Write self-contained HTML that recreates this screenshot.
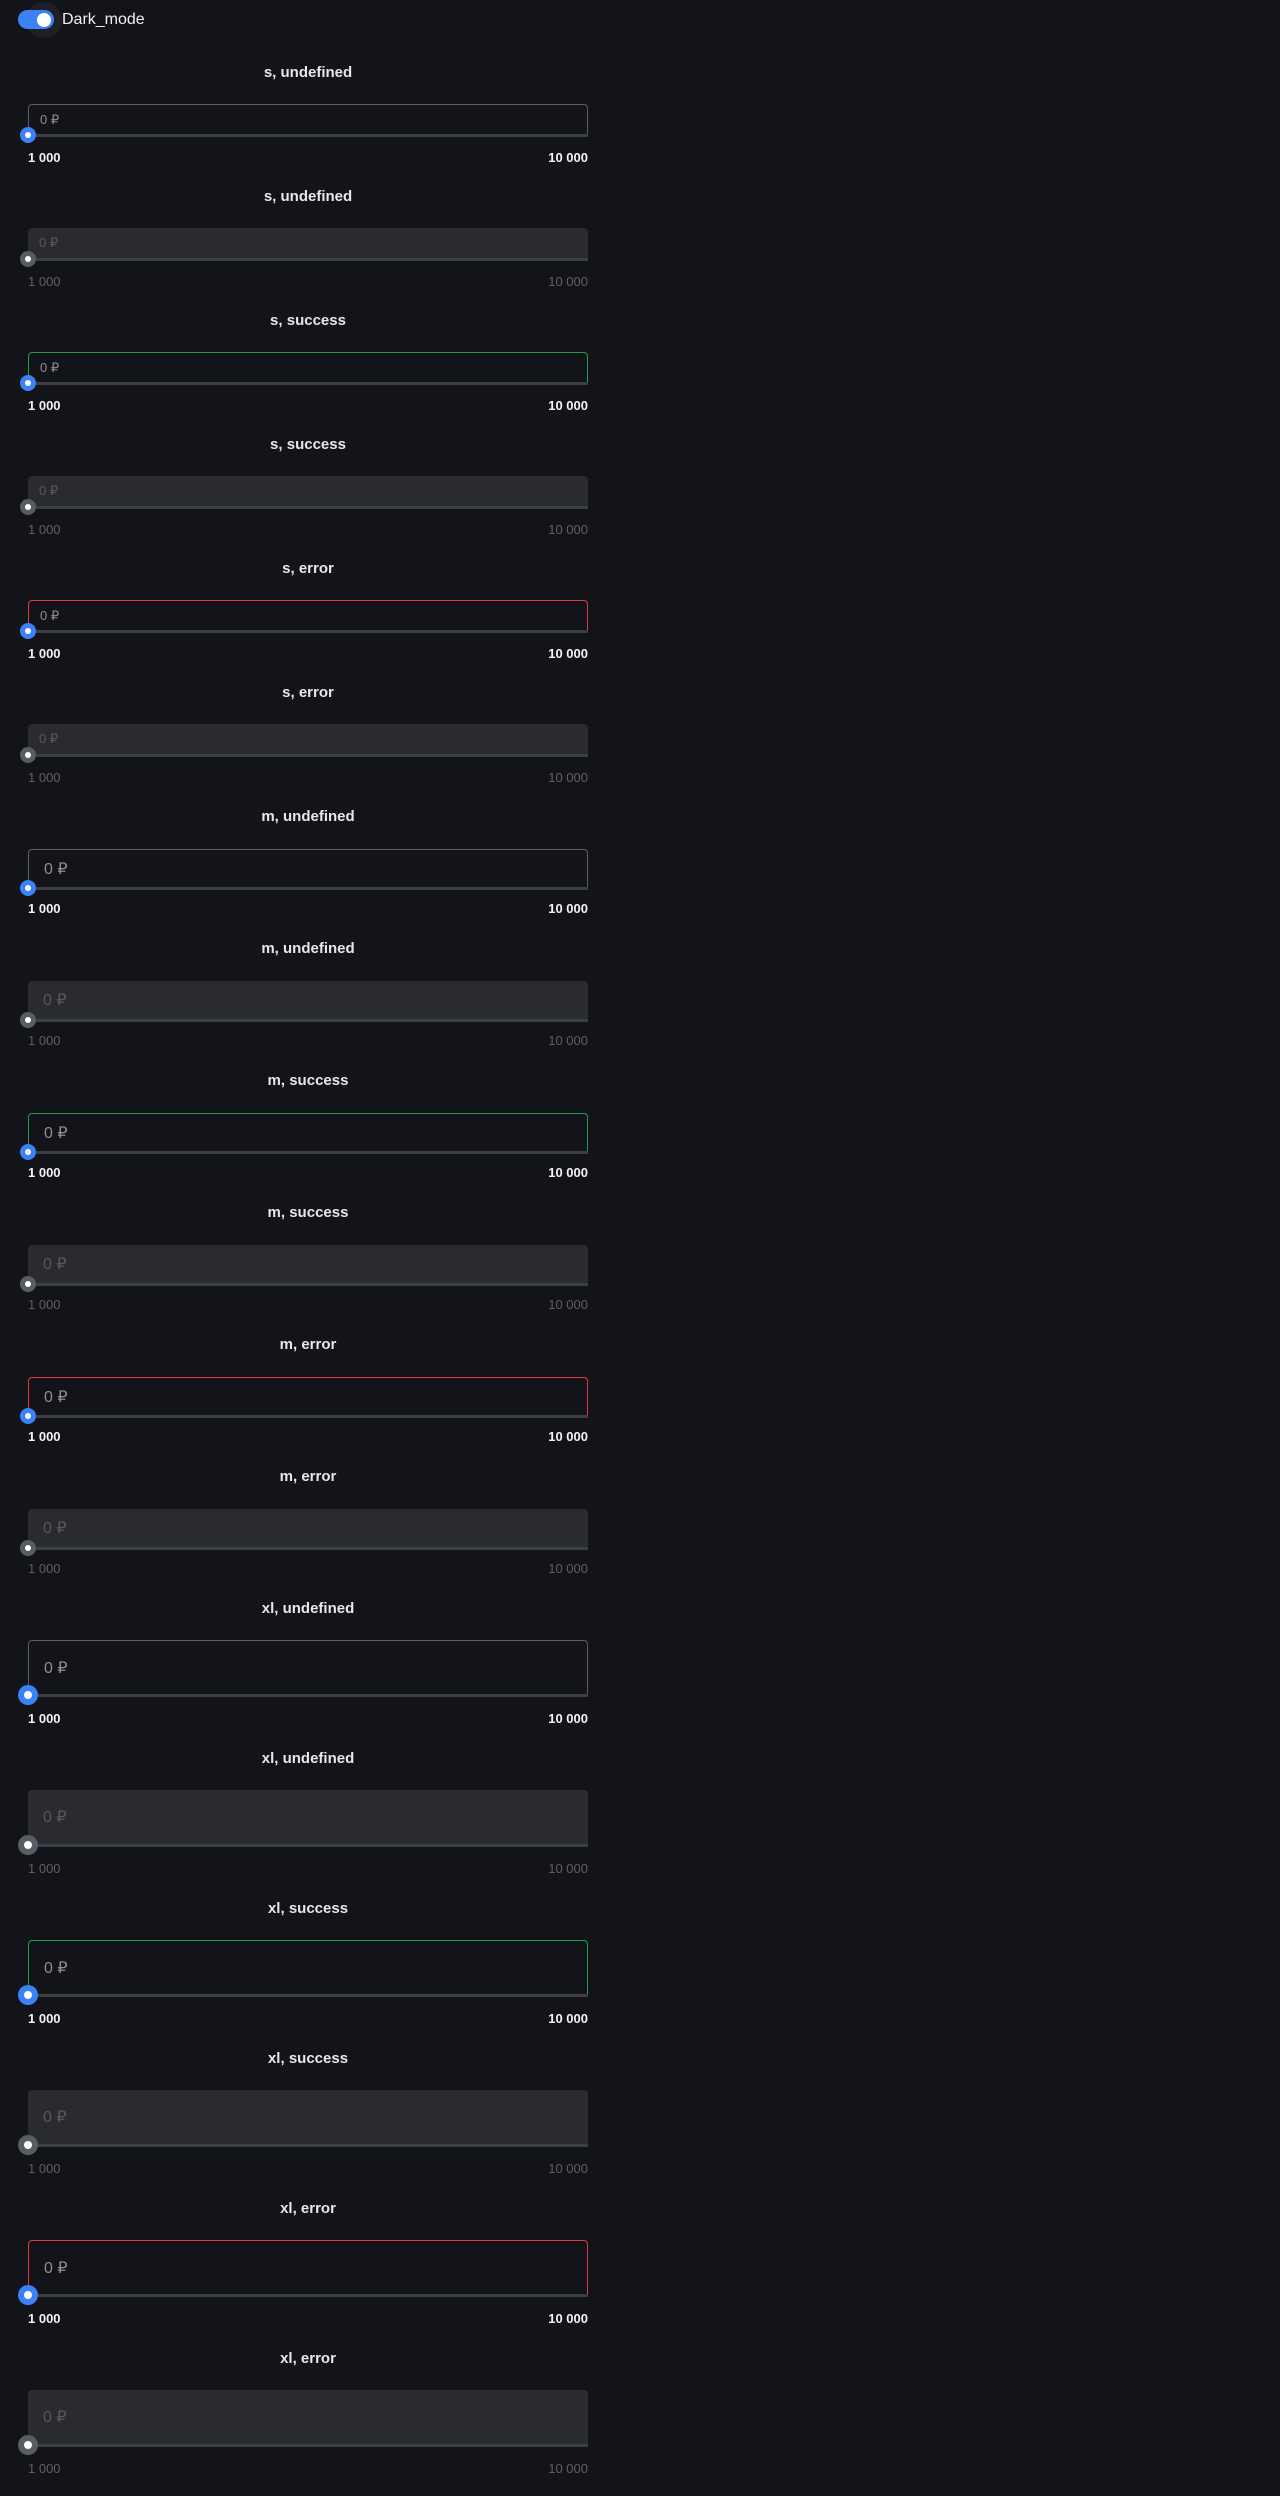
<!DOCTYPE html>
<html><head><meta charset="utf-8">
<style>
html,body{margin:0;padding:0;background:#131419;width:1280px;height:2496px;overflow:hidden;font-family:"Liberation Sans",sans-serif;}
.a{position:absolute;}
.t{position:absolute;left:28px;width:560px;text-align:center;color:#e6e7ea;font-size:15px;font-weight:bold;line-height:18px;}
.box{position:absolute;left:28px;width:558px;border:1px solid #5b5e65;border-bottom:none;border-radius:4px 4px 0 0;box-sizing:content-box;}
.box.dis{border:none;background:#2a2b30;width:560px;}
.box.success{border-color:#1f9d47;}
.box.error{border-color:#e0393b;}
.track{position:absolute;left:28px;width:560px;height:3px;background:#3b3e45;}
.v{position:absolute;color:#8b8e94;}
.dis .v{color:#55585f;}
.th{position:absolute;border-radius:50%;background:#3b82f6;}
.th.d{background:#5a5c63;}
.th i{position:absolute;border-radius:50%;background:#fff;}
.lb{position:absolute;font-size:13px;line-height:16px;color:#f2f3f5;font-weight:bold;}
.lb.d{color:#5d6067;font-weight:normal;}
</style></head><body>
<div class="a" style="left:26px;top:2px;width:36px;height:36px;border-radius:50%;background:#1f2025;"></div>
<div class="a" style="left:18px;top:10px;width:36px;height:19px;border-radius:10px;background:#3b82f6;"></div>
<div class="a" style="left:37px;top:13px;width:14px;height:14px;border-radius:50%;background:#fff;"></div>
<div class="a" style="left:62px;top:10px;font-size:16px;line-height:20px;color:#eef0f3;">Dark_mode</div>
<div id="root"></div>
<script>
var sizes=[
 {n:'s',start:72,pitch:124,top:32,track:63,lab:85,r:8,dr:3,fs:13,tx:40},
 {n:'m',start:816,pitch:132,top:33,track:72,lab:92,r:8,dr:3,fs:16,tx:44},
 {n:'xl',start:1608,pitch:150,top:32,track:87,lab:110,r:10,dr:4,fs:16,tx:44}
];
var st=['undefined','success','error'];
var h='';
sizes.forEach(function(s){
 var k=0;
 st.forEach(function(state){
  [false,true].forEach(function(dis){
   var y=s.start+k*s.pitch;k++;
   h+='<div class="t" style="top:'+(y-8)+'px">'+s.n+', '+state+'</div>';
   var bt=y+s.top, tr=y+s.track, bh=tr-bt;
   h+='<div class="box '+(dis?'dis':state)+'" style="top:'+bt+'px;height:'+bh+'px"><div class="v" style="left:'+(s.tx-29)+'px;top:'+(bh/2-s.fs*0.62)+'px;font-size:'+s.fs+'px;line-height:'+(s.fs*1.2)+'px">0 ₽</div></div>';
   h+='<div class="track" style="top:'+(tr-1)+'px"></div>';
   h+='<div class="th'+(dis?' d':'')+'" style="left:'+(28-s.r)+'px;top:'+(tr-s.r)+'px;width:'+(2*s.r)+'px;height:'+(2*s.r)+'px"><i style="left:'+(s.r-s.dr)+'px;top:'+(s.r-s.dr)+'px;width:'+(2*s.dr)+'px;height:'+(2*s.dr)+'px"></i></div>';
   var ly=y+s.lab-7;
   h+='<div class="lb'+(dis?' d':'')+'" style="left:28px;top:'+ly+'px">1 000</div>';
   h+='<div class="lb'+(dis?' d':'')+'" style="left:488px;width:100px;text-align:right;top:'+ly+'px">10 000</div>';
  });
 });
});
document.getElementById('root').innerHTML=h;
</script>
</body></html>
